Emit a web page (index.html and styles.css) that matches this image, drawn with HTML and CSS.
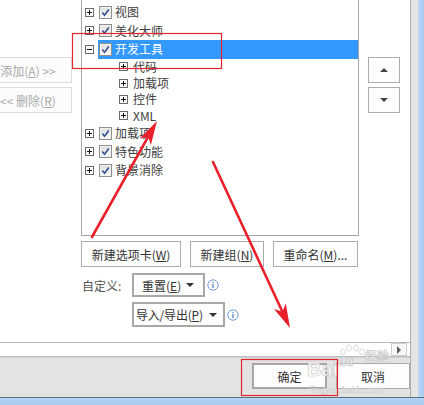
FILE: index.html
```html
<!DOCTYPE html>
<html lang="zh-CN">
<head>
    <meta charset="UTF-8">
    <title>自定义功能区</title>
    <link rel="stylesheet" href="styles.css">
</head>
<body>
    <div class="window">
        <div class="main">
            <div class="dialog">
                <div class="content">
                    <div class="left-col">
                        <button class="move-btn" disabled>添加(<u>A</u>) &gt;&gt;</button>
                        <button class="move-btn" disabled>&lt;&lt; 删除(<u>R</u>)</button>
                    </div>

                    <div class="center-col">
                        <div class="tree">
                            <div class="row"><span class="exp plus"></span><div class="item"><span class="chk"><svg viewBox="0 0 11 11"><path d="M2.3 5.6 4.5 8.2 8.8 2.4"/></svg></span><span class="label">视图</span></div></div>
                            <div class="row"><span class="exp plus"></span><div class="item"><span class="chk"><svg viewBox="0 0 11 11"><path d="M2.3 5.6 4.5 8.2 8.8 2.4"/></svg></span><span class="label">美化大师</span></div></div>
                            <div class="row"><span class="exp"></span><div class="item selected"><span class="chk"><svg viewBox="0 0 11 11"><path d="M2.3 5.6 4.5 8.2 8.8 2.4"/></svg></span><span class="label">开发工具</span></div></div>
                            <div class="row sub"><span class="exp plus"></span><span class="label">代码</span></div>
                            <div class="row sub"><span class="exp plus"></span><span class="label">加载项</span></div>
                            <div class="row sub"><span class="exp plus"></span><span class="label">控件</span></div>
                            <div class="row sub"><span class="exp plus"></span><span class="label">XML</span></div>
                            <div class="row"><span class="exp plus"></span><div class="item"><span class="chk"><svg viewBox="0 0 11 11"><path d="M2.3 5.6 4.5 8.2 8.8 2.4"/></svg></span><span class="label">加载项</span></div></div>
                            <div class="row"><span class="exp plus"></span><div class="item"><span class="chk"><svg viewBox="0 0 11 11"><path d="M2.3 5.6 4.5 8.2 8.8 2.4"/></svg></span><span class="label">特色功能</span></div></div>
                            <div class="row"><span class="exp plus"></span><div class="item"><span class="chk"><svg viewBox="0 0 11 11"><path d="M2.3 5.6 4.5 8.2 8.8 2.4"/></svg></span><span class="label">背景消除</span></div></div>
                        </div>

                        <div class="btn-row">
                            <button class="btn btn-tab">新建选项卡(<u>W</u>)</button>
                            <button class="btn btn-group">新建组(<u>N</u>)</button>
                            <button class="btn btn-rename">重命名(<u>M</u>)...</button>
                        </div>

                        <div class="custom-row">
                            <span class="custom-label">自定义:</span>
                            <div class="dropdown dd-reset"><span>重置(<u>E</u>)</span><span class="caret"></span></div>
                            <svg class="info" viewBox="0 0 12 12"><circle cx="6" cy="6" r="5.2"/><rect x="5.4" y="5" width="1.2" height="4"/><rect x="5.4" y="2.8" width="1.2" height="1.2"/></svg>
                        </div>
                        <div class="custom-row second">
                            <div class="dropdown dd-import"><span>导入/导出(<u>P</u>)</span><span class="caret"></span></div>
                            <svg class="info" viewBox="0 0 12 12"><circle cx="6" cy="6" r="5.2"/><rect x="5.4" y="5" width="1.2" height="4"/><rect x="5.4" y="2.8" width="1.2" height="1.2"/></svg>
                        </div>
                    </div>

                    <div class="right-col">
                        <button class="arrow-btn"><span class="tri-up"></span></button>
                        <button class="arrow-btn"><span class="tri-down"></span></button>
                    </div>
                </div>

                <div class="hscroll">
                    <div class="scroll-btn"><span class="tri-right"></span></div>
                </div>

                <div class="footer">
                    <button class="ok">确定</button>
                    <button class="cancel">取消</button>
                </div>
            </div>
            <div class="side"></div>
            <div class="edge"></div>
        </div>
        <div class="bottom-edge"></div>

        <!-- пометки поверх скриншота -->
        <svg class="marks" viewBox="0 0 424 405">
            <g class="wm">
                <ellipse cx="343" cy="352" rx="2.4" ry="3"/>
                <ellipse cx="349" cy="348" rx="2.4" ry="3"/>
                <ellipse cx="356" cy="348" rx="2.4" ry="3"/>
                <ellipse cx="362" cy="352" rx="2.4" ry="3"/>
                <text x="307" y="376" class="wm-big">Bai</text>
                <text x="338" y="366" class="wm-mid">du</text>
                <text x="365" y="361" class="wm-mid">经验</text>
                <text x="311" y="393" class="wm-small">jingyan.baidu.com</text>
            </g>
            <rect class="red-box" x="72.5" y="33.5" width="149" height="35"/>
            <rect class="red-box" x="241.5" y="359.5" width="96" height="36"/>
            <line class="red-line" x1="92" y1="237" x2="148.2" y2="136.7"/>
            <polygon class="red-head" points="157,121 150.9,145.1 148.2,136.7 139.6,138.8"/>
            <line class="red-line" x1="213" y1="162" x2="282.4" y2="311.7"/>
            <polygon class="red-head" points="290,328 274,309 282.4,311.7 285.8,303.5"/>
        </svg>
    </div>
</body>
</html>
```

FILE: styles.css
```css
* {
    margin: 0;
    padding: 0;
    box-sizing: border-box;
}

body {
    width: 424px;
    height: 405px;
    overflow: hidden;
    background: #fff;
    font-family: "Noto Sans CJK SC", sans-serif;
    font-size: 12px;
    color: #404040;
}

button {
    font: inherit;
    color: #333;
    cursor: pointer;
}

.window {
    position: relative;
    width: 424px;
    height: 405px;
}

.main {
    display: flex;
    height: 397px;
}

.dialog {
    width: 410px;
    display: flex;
    flex-direction: column;
    background: #fff;
}

.side {
    width: 8px;
    border-left: 1px solid #acacac;
    background: #e5e5e5;
}

.edge {
    width: 6px;
    background: linear-gradient(to right, #bcd9f6, #a7c9ee);
}

.bottom-edge {
    height: 8px;
    border-top: 1px solid #5b6e80;
    background: linear-gradient(#b4d4f5, #a8caef);
}

.content {
    height: 342px;
    display: grid;
    grid-template-columns: 81px 278px 51px;
    align-items: start;
}

/* левая колонка */
.left-col {
    display: flex;
    flex-direction: column;
    gap: 4px;
    padding-top: 57px;
}

.move-btn {
    width: 88px;
    height: 26px;
    margin-left: -16px;
    border: 1px solid #dcdcdc;
    background: #fcfcfc;
    color: #a9a9a9;
}

/* дерево */
.tree {
    height: 236px;
    border: 1px solid #a5a5a5;
    border-top: none;
    padding: 3px 0 0 3px;
}

.row {
    display: flex;
    align-items: center;
    height: 18.5px;
}

.row.sub {
    height: 16.4px;
    padding-left: 34px;
}

.exp {
    flex: none;
    width: 9px;
    height: 9px;
    margin-right: 4px;
    border: 1px solid #6b6b6b;
    background: linear-gradient(#111, #111) center / 5px 1px no-repeat, #fff;
}

.exp.plus {
    background: linear-gradient(#111, #111) center / 5px 1px no-repeat,
                linear-gradient(#111, #111) center / 1px 5px no-repeat, #fff;
}

.row.sub .exp {
    margin-right: 5px;
}

.item {
    flex: 1;
    display: flex;
    align-items: center;
    height: 100%;
    padding-left: 1px;
}

.item.selected {
    background: #3399ff;
    color: #fff;
}

.chk {
    flex: none;
    width: 13px;
    height: 13px;
    border: 1px solid #8e8f8f;
    background: linear-gradient(#dedede, #fafafa);
    box-shadow: inset 0 0 0 1px #f2f2f2;
}

.chk svg {
    display: block;
    width: 11px;
    height: 11px;
}

.chk path {
    fill: none;
    stroke: #33508f;
    stroke-width: 1.6;
}

.label {
    margin-left: 3px;
    line-height: 16px;
    white-space: nowrap;
}

.row.sub .label {
    margin-left: 0;
}

/* кнопки под деревом */
.btn-row {
    display: flex;
    gap: 9px;
    margin-top: 5px;
}

.btn {
    height: 26px;
    border: 1px solid #adadad;
    background: #fdfdfd;
}

.btn-tab { width: 100px; }
.btn-group { width: 74px; }
.btn-rename { width: 85px; }

.custom-row {
    display: flex;
    align-items: center;
    height: 24px;
    margin-top: 6px;
}

.custom-row.second {
    height: 25px;
    margin-top: 5px;
    padding-left: 51px;
}

.custom-label {
    width: 51px;
    padding-left: 1px;
    color: #555;
}

.dropdown {
    display: flex;
    align-items: center;
    justify-content: space-between;
    height: 100%;
    padding: 0 9px 0 8px;
    border: 2px solid #a8a8a8;
    background: #fdfdfd;
    color: #333;
    white-space: nowrap;
}

.dd-reset { width: 73px; }

.dd-import {
    width: 93px;
    padding: 0 6px 0 2px;
    letter-spacing: -0.2px;
}

.caret {
    border-left: 4px solid transparent;
    border-right: 4px solid transparent;
    border-top: 4px solid #333;
}

.info {
    width: 12px;
    height: 12px;
    margin-left: 2px;
}

.info circle {
    fill: #fff;
    stroke: #6d9bd7;
}

.info rect {
    fill: #3f78c4;
}

/* правая колонка */
.right-col {
    display: flex;
    flex-direction: column;
    gap: 4px;
    padding: 57px 0 0 9px;
}

.arrow-btn {
    width: 32px;
    height: 26px;
    border: 1px solid #adadad;
    background: #fdfdfd;
    display: flex;
    align-items: center;
    justify-content: center;
}

.tri-up {
    border-left: 4px solid transparent;
    border-right: 4px solid transparent;
    border-bottom: 4px solid #444;
}

.tri-down {
    border-left: 4px solid transparent;
    border-right: 4px solid transparent;
    border-top: 4px solid #444;
}

/* прокрутка и низ */
.hscroll {
    height: 15px;
    border-top: 1px solid #b9b9b9;
    border-bottom: 1px solid #c0c0c0;
    display: flex;
    justify-content: flex-end;
    padding-right: 3px;
}

.scroll-btn {
    width: 16px;
    height: 13px;
    border: 1px solid #cdcdcd;
    background: #f6f6f6;
    display: flex;
    align-items: center;
    justify-content: center;
}

.tri-right {
    border-top: 4px solid transparent;
    border-bottom: 4px solid transparent;
    border-left: 4px solid #606060;
}

.footer {
    flex: 1;
    display: flex;
    gap: 9px;
    padding: 5px 0 0 252px;
    background: #e3e3e3;
    border-top: 1px solid #cfcfcf;
}

.ok {
    width: 75px;
    height: 26px;
    border: 2px solid #a8a8a8;
    background: #fdfdfd;
}

.cancel {
    width: 74px;
    height: 26px;
    border: 1px solid #adadad;
    background: #fdfdfd;
}

/* аннотации */
.marks {
    position: absolute;
    top: 0;
    left: 0;
    width: 424px;
    height: 405px;
    pointer-events: none;
}

.wm {
    fill: #fff;
    stroke: #c2c2c2;
    stroke-width: 0.7;
    opacity: 0.85;
}

.wm-big {
    font-family: "Liberation Sans", sans-serif;
    font-size: 20px;
    font-weight: bold;
}

.wm-mid {
    font-family: "Noto Sans CJK SC", sans-serif;
    font-size: 12px;
    font-weight: bold;
}

.wm-small {
    font-family: "Liberation Sans", sans-serif;
    font-size: 9px;
    stroke-width: 0.4;
}

.red-box {
    fill: none;
    stroke: #e3262d;
    stroke-width: 1.2;
}

.red-line {
    stroke: #e8202a;
    stroke-width: 2.6;
    stroke-linecap: round;
}

.red-head {
    fill: #e8202a;
}
```
